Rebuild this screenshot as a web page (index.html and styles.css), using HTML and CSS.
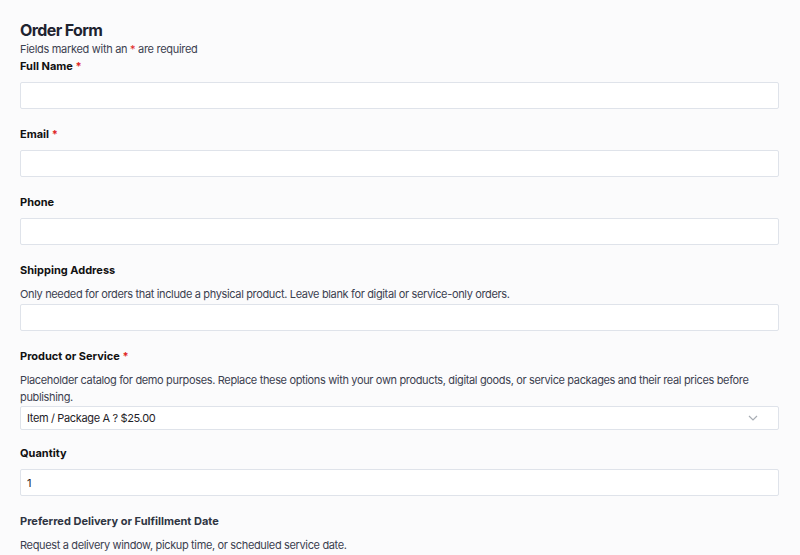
FILE: index.html
```html
<!DOCTYPE html>
<html lang="en">
<head>
  <meta charset="UTF-8">
  <meta name="viewport" content="width=device-width, initial-scale=1.0">
  <title>Order Form</title>
  <link rel="stylesheet" href="styles.css">
</head>
<body>

<div class="container">
  <h2>Order Form</h2>
  <p class="note">Fields marked with an <span class="req">*</span> are required</p>

  <form action="/order" method="POST">
    <div class="field">
      <label for="full-name">Full Name <span class="req">*</span></label>
      <input type="text" id="full-name" name="full_name">
    </div>

    <div class="field">
      <label for="email">Email <span class="req">*</span></label>
      <input type="text" id="email" name="email">
    </div>

    <div class="field">
      <label for="phone">Phone</label>
      <input type="text" id="phone" name="phone">
    </div>

    <div class="field">
      <label for="address">Shipping Address</label>
      <p class="help">Only needed for orders that include a physical product. Leave blank for digital or service-only orders.</p>
      <input type="text" id="address" name="address">
    </div>

    <div class="field field-select">
      <label for="product">Product or Service <span class="req">*</span></label>
      <p class="help">Placeholder catalog for demo purposes. Replace these options with your own products, digital goods, or service packages and their real prices before publishing.</p>
      <div class="select-wrap">
        <select id="product" name="product">
          <option>Item / Package A ? $25.00</option>
          <option>Item / Package B ? $50.00</option>
        </select>
        <svg class="chevron" width="10" height="6" viewBox="0 0 10 6"><path d="M1 1l4 4 4-4" fill="none" stroke="#a8adb4" stroke-width="1.2"/></svg>
      </div>
    </div>

    <div class="field">
      <label for="qty">Quantity</label>
      <input type="text" id="qty" name="qty" value="1">
    </div>

    <div class="field">
      <label for="date" class="soft">Preferred Delivery or Fulfillment Date</label>
      <p class="help">Request a delivery window, pickup time, or scheduled service date.</p>
      <input type="text" id="date" name="date">
    </div>
  </form>
</div>

</body>
</html>
```

FILE: styles.css
```css
body {
  background-color: #fbfbfc;
  font-family: Inter, "Liberation Sans", sans-serif;
  color: #1f2328;
  margin: 0;
  padding: 0;
}
.container {
  padding: 20px 21px 0 20px;
}
h2 {
  font-size: 16px;
  font-weight: 700;
  letter-spacing: -0.6px;
  color: #1e2330;
  margin: 0;
  line-height: 20px;
}
.note {
  font-size: 11px;
  letter-spacing: -0.3px;
  color: #3b4150;
  margin: 0;
  line-height: 18px;
}
.req {
  color: #e02424;
}
.field {
  margin-bottom: 17px;
}
label {
  display: block;
  font-weight: 700;
  font-size: 11px;
  line-height: 16px;
  color: #111;
  margin-bottom: 8px;
}
label.soft {
  color: #2f3542;
}
.help {
  font-size: 11px;
  letter-spacing: -0.35px;
  color: #3b4150;
  line-height: 17px;
  margin: 0 0 1px;
}
input[type="text"],
select {
  display: block;
  width: 100%;
  box-sizing: border-box;
  height: 27px;
  padding: 0 6px;
  background-color: #fff;
  border: 1px solid #dfe3ea;
  border-radius: 2px;
  font-family: inherit;
  font-size: 11px;
  letter-spacing: -0.35px;
  color: #1f2328;
}
.field-select {
  margin-bottom: 15px;
}
.field-select .help {
  margin-bottom: 0;
}
.select-wrap {
  position: relative;
}
select {
  height: 24px;
  appearance: none;
  -webkit-appearance: none;
}
.chevron {
  position: absolute;
  right: 21px;
  top: 9px;
}
```
